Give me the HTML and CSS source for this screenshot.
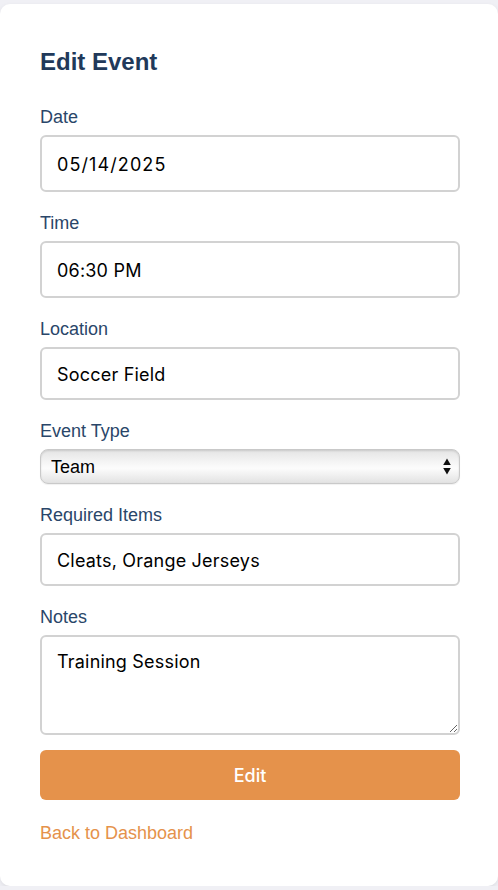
FILE: index.html
```html
<!DOCTYPE html>
<html lang="en">
<head>
<meta charset="utf-8">
<title>Edit Event</title>
<link rel="stylesheet" href="styles.css">
</head>
<body>
<main class="card">
  <h1 class="title">Edit Event</h1>
  <form class="form">
    <div class="field">
      <label class="label" for="date">Date</label>
      <input class="input input-tall input-date" id="date" type="text" value="05/14/2025">
    </div>
    <div class="field">
      <label class="label" for="time">Time</label>
      <input class="input input-tall" id="time" type="text" value="06:30 PM">
    </div>
    <div class="field">
      <label class="label" for="location">Location</label>
      <input class="input" id="location" type="text" value="Soccer Field">
    </div>
    <div class="field">
      <label class="label" for="type">Event Type</label>
      <div class="select-wrap">
        <select class="select" id="type">
          <option>Team</option>
          <option>Individual</option>
        </select>
        <svg class="select-arrows" width="8" height="17" viewBox="0 0 8 17" aria-hidden="true">
          <path d="M4 0.5 L7.8 7 L0.2 7 Z" fill="#111"/>
          <path d="M0.2 10 L7.8 10 L4 16.5 Z" fill="#111"/>
        </svg>
      </div>
    </div>
    <div class="field">
      <label class="label" for="items">Required Items</label>
      <input class="input" id="items" type="text" value="Cleats, Orange Jerseys">
    </div>
    <div class="field">
      <label class="label" for="notes">Notes</label>
      <textarea class="textarea" id="notes">Training Session</textarea>
    </div>
    <button class="button" type="button">Edit</button>
  </form>
  <a class="back" href="#">Back to Dashboard</a>
</main>
</body>
</html>
```

FILE: styles.css
```css
* {
  box-sizing: border-box;
}

html, body {
  margin: 0;
  padding: 0;
}

body {
  background: #f0f0f5;
  font-family: "Liberation Sans", Arial, sans-serif;
  padding-top: 4px;
}

.card {
  background: #ffffff;
  border-radius: 10px;
  box-shadow: 0 2px 5px rgba(0, 0, 0, 0.08);
  padding: 44px 38px 45px 40px;
  height: 882px;
}

.title {
  margin: 0 0 30px 0;
  font-size: 24px;
  font-weight: bold;
  color: #21395a;
  line-height: 28px;
}

.form {
  display: flex;
  flex-direction: column;
}

.field {
  display: flex;
  flex-direction: column;
  margin-bottom: 20px;
}

.label {
  display: block;
  font-size: 18px;
  line-height: 18px;
  padding-top: 2px;
  color: #2a4669;
  margin-bottom: 9px;
}

.input,
.textarea {
  width: 100%;
  height: 53px;
  border: 2px solid #d2d2d2;
  border-radius: 6px;
  padding: 2px 15px 0 15px;
  font-family: Inter, "Noto Sans", sans-serif;
  font-size: 18px;
  letter-spacing: 0.2px;
  color: #000;
  background: #fff;
  outline: none;
}

.input-tall {
  height: 57px;
}

.input-date {
  letter-spacing: 1.1px;
}

.select-wrap {
  position: relative;
}

.select {
  -webkit-appearance: none;
  appearance: none;
  width: 100%;
  height: 35px;
  border: 1px solid #c9c9c9;
  border-radius: 8px;
  padding: 0 10px;
  font-family: "Liberation Sans", Arial, sans-serif;
  font-size: 18px;
  color: #000;
  background: linear-gradient(#e4e4e4 0%, #f4f4f4 35%, #fcfcfc 55%, #eeeeee 80%, #e2e2e2 100%);
  box-shadow: inset 0 1px 2px rgba(0, 0, 0, 0.12), 0 1px 1px rgba(0, 0, 0, 0.06);
  outline: none;
}

.select-arrows {
  position: absolute;
  right: 9px;
  top: 9px;
  pointer-events: none;
}

.textarea {
  height: 100px;
  padding: 15px;
  resize: vertical;
  display: block;
  line-height: 20px;
}

.field:last-of-type {
  margin-bottom: 15px;
}

.button {
  width: 100%;
  height: 50px;
  border: none;
  border-radius: 6px;
  background: #e5924b;
  color: #fff;
  font-family: Inter, "Noto Sans", sans-serif;
  font-size: 18px;
  font-weight: 500;
  cursor: pointer;
}

.back {
  display: inline-block;
  margin-top: 22px;
  padding-top: 2px;
  color: #e5924b;
  font-size: 18px;
  line-height: 19px;
  text-decoration: none;
}
```
